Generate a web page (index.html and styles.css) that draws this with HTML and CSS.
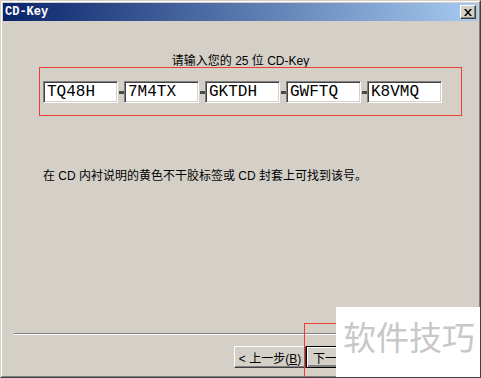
FILE: index.html
```html
<!DOCTYPE html>
<html lang="zh-CN">
<head>
    <meta charset="UTF-8">
    <title>CD-Key</title>
    <link rel="stylesheet" href="styles.css">
</head>
<body>
    <div class="window">
        <div class="frame">
            <div class="titlebar">
                <span class="title">CD-Key</span>
                <button class="close" aria-label="关闭">
                    <svg width="8" height="7" viewBox="0 0 8 7">
                        <path d="M0 0h2l2 2.5 2-2.5h2l-3 3.5 3 3.5h-2l-2-2.5-2 2.5h-2l3-3.5z" fill="#000"/>
                    </svg>
                </button>
            </div>

            <div class="client">
                <p class="prompt">请输入您的 25 位 CD-Key</p>

                <div class="keys">
                    <input class="key" type="text" value="TQ48H" readonly>
                    <span class="dash"></span>
                    <input class="key" type="text" value="7M4TX" readonly>
                    <span class="dash"></span>
                    <input class="key" type="text" value="GKTDH" readonly>
                    <span class="dash"></span>
                    <input class="key" type="text" value="GWFTQ" readonly>
                    <span class="dash"></span>
                    <input class="key" type="text" value="K8VMQ" readonly>
                </div>

                <p class="hint">在 CD 内衬说明的黄色不干胶标签或 CD 封套上可找到该号。</p>

                <div class="separator"></div>

                <div class="buttons">
                    <button class="btn back">&lt; 上一步(<u>B</u>)</button>
                    <button class="btn next">下一</button>
                </div>
            </div>
        </div>

        <div class="mark"></div>
        <div class="watermark">软件技巧</div>
    </div>
</body>
</html>
```

FILE: styles.css
```css
/* Reset */
* {
    margin: 0;
    padding: 0;
    box-sizing: border-box;
}

body {
    background: #d4d0c8;
    font-family: "Liberation Sans", "Noto Sans CJK SC", sans-serif;
    font-size: 12px;
    color: #000;
}

/* Window frame */
.window {
    position: relative;
    width: 481px;
    height: 378px;
    overflow: hidden;
    border: 1px solid;
    border-color: #d4d0c8 #404040 #404040 #d4d0c8;
}

.frame {
    height: 100%;
    border: 1px solid;
    border-color: #fff #808080 #808080 #fff;
    padding: 1px;
}

/* Title bar */
.titlebar {
    height: 18px;
    display: flex;
    align-items: center;
    justify-content: space-between;
    padding: 0 2px 0 2px;
    background: linear-gradient(90deg, #0a246a, #a6caf0);
}

.title {
    color: #fff;
    font-family: "Liberation Mono", monospace;
    font-weight: bold;
    font-size: 12px;
    line-height: 14px;
}

.close {
    width: 16px;
    height: 14px;
    display: flex;
    align-items: center;
    justify-content: center;
    background: #d4d0c8;
    border: 1px solid;
    border-color: #fff #404040 #404040 #fff;
    box-shadow: inset -1px -1px #808080;
}

/* Client area */
.client {
    display: flex;
    flex-direction: column;
}

.prompt {
    margin-top: 34px;
    height: 12px;
    line-height: 12px;
    text-align: center;
}

/* key entry row, outlined in red */
.keys {
    display: flex;
    align-items: center;
    margin-left: 36px;
    width: 423px;
    height: 49px;
    padding: 13px 0 12px 4px;
    box-shadow: inset 0 0 0 1px #f03c32;
}

.key {
    width: 75px;
    height: 22px;
    padding: 0 3px;
    background: #fff;
    border: 1px solid;
    border-color: #808080 #fff #fff #808080;
    box-shadow: inset 1px 1px #404040, inset -1px -1px #d4d0c8;
    font-family: "Liberation Mono", monospace;
    font-size: 16px;
    color: #000;
    outline: none;
}

.dash {
    width: 6px;
    height: 3px;
    margin-top: 1px;
    padding-left: 1px;
    background: #4a4a4a;
    background-clip: content-box;
}

.hint {
    margin: 53px 0 0 40px;
    line-height: 14px;
}

.separator {
    margin: 150px 11px 0 11px;
    height: 2px;
    border-top: 1px solid #808080;
    border-bottom: 1px solid #fff;
}

/* Wizard buttons */
.buttons {
    display: flex;
    margin-top: 11px;
    padding-left: 231px;
}

.btn {
    height: 22px;
    background: #d4d0c8;
    font-family: "Liberation Sans", "Noto Sans CJK SC", sans-serif;
    font-size: 12px;
    color: #000;
    border: 1px solid;
    border-color: #fff #404040 #404040 #fff;
    box-shadow: inset -1px -1px #808080;
    white-space: nowrap;
    overflow: hidden;
}

.back {
    width: 72px;
}

.next {
    width: 76px;
    text-align: left;
    padding-left: 6px;
    border: 1px solid #000;
    box-shadow: inset 1px 1px #fff, inset -2px -2px #808080;
}

/* Annotation and overlay */
.mark {
    position: absolute;
    left: 303px;
    top: 322px;
    width: 120px;
    height: 80px;
    border: 1px solid #f03c32;
}

.watermark {
    position: absolute;
    left: 335px;
    top: 306px;
    width: 150px;
    height: 80px;
    background: #fff;
    color: #c8c8c8;
    font-family: "Noto Sans CJK SC", sans-serif;
    font-size: 33px;
    line-height: 40px;
    padding: 9px 0 0 7px;
}
```
